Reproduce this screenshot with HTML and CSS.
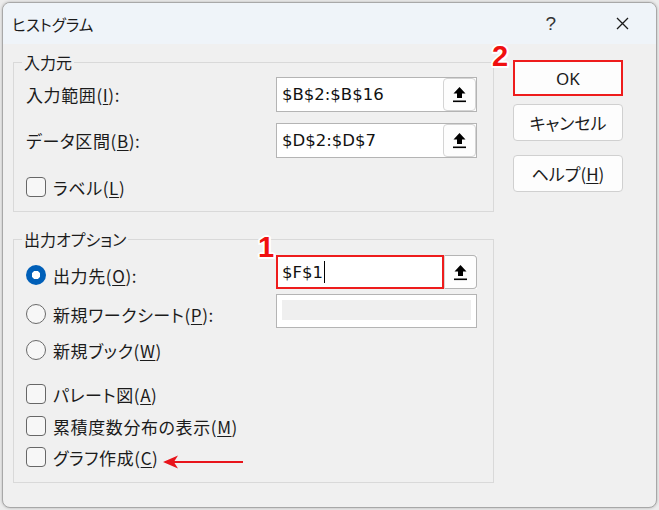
FILE: index.html
```html
<!DOCTYPE html>
<html lang="ja">
<head>
<meta charset="utf-8">
<title>ヒストグラム</title>
<link rel="stylesheet" href="styles.css">
</head>
<body>
<div class="window">
  <div class="titlebar">
    <span class="title">ヒストグラム</span>
    <span class="help">?</span>
    <svg class="close" width="13" height="13" viewBox="0 0 13 13"><path d="M1 1 L12 12 M12 1 L1 12" stroke="#1a1a1a" stroke-width="1.3" fill="none"/></svg>
  </div>
  <div class="content">
    <div class="left">
      <div class="group g1">
        <span class="legend">入力元</span>
        <div class="row">
          <span class="lbl">入力範囲(<u>I</u>):</span>
          <div class="ref">
            <span class="val">$B$2:$B$16</span>
            <span class="pick"><svg width="13" height="17" viewBox="0 0 13 17"><polygon points="6.5,1 12.5,7.5 9,7.5 9,12 4,12 4,7.5 0.5,7.5" fill="#000"/><rect x="0" y="14.5" width="13" height="1.6" fill="#000"/></svg></span>
          </div>
        </div>
        <div class="row r2">
          <span class="lbl">データ区間(<u>B</u>):</span>
          <div class="ref">
            <span class="val">$D$2:$D$7</span>
            <span class="pick"><svg width="13" height="17" viewBox="0 0 13 17"><polygon points="6.5,1 12.5,7.5 9,7.5 9,12 4,12 4,7.5 0.5,7.5" fill="#000"/><rect x="0" y="14.5" width="13" height="1.6" fill="#000"/></svg></span>
          </div>
        </div>
        <div class="check c-label"><span class="box"></span><span>ラベル(<u>L</u>)</span></div>
      </div>

      <div class="group g2">
        <span class="legend">出力オプション</span>
        <div class="row o1">
          <span class="lbl opt"><span class="radio on"></span>出力先(<u>O</u>):</span>
          <div class="ref active">
            <span class="val focus">$F$1<span class="caret"></span></span>
            <span class="pick"><svg width="13" height="17" viewBox="0 0 13 17"><polygon points="6.5,1 12.5,7.5 9,7.5 9,12 4,12 4,7.5 0.5,7.5" fill="#000"/><rect x="0" y="14.5" width="13" height="1.6" fill="#000"/></svg></span>
          </div>
        </div>
        <div class="row o2">
          <span class="lbl opt"><span class="radio"></span>新規ワークシート(<u>P</u>):</span>
          <div class="ref disabled"><span class="inner"></span></div>
        </div>
        <div class="check o3"><span class="radio"></span><span>新規ブック(<u>W</u>)</span></div>
        <div class="check k1"><span class="box"></span><span>パレート図(<u>A</u>)</span></div>
        <div class="check k2"><span class="box"></span><span>累積度数分布の表示(<u>M</u>)</span></div>
        <div class="check k3"><span class="box"></span><span>グラフ作成(<u>C</u>)</span></div>
      </div>
    </div>
    <div class="right">
      <button class="btn ok">OK</button>
      <button class="btn cancel">キャンセル</button>
      <button class="btn helpbtn">ヘルプ(<u>H</u>)</button>
    </div>
  </div>
  <span class="mark m2">2</span>
  <span class="mark m1">1</span>
  <svg class="arrow" width="82" height="14" viewBox="0 0 82 14"><polygon points="0,7 15,0.5 11.5,6 80,6 80,8 11.5,8 15,13.5" fill="#e8141b"/></svg>
</div>
</body>
</html>
```
FILE: styles.css
```css
* { box-sizing: border-box; }
html, body { margin: 0; padding: 0; }
body {
  background: #ececec;
  width: 659px;
  height: 510px;
  overflow: hidden;
  font-family: "Noto Sans CJK JP", "Noto Sans", sans-serif;
  font-feature-settings: "palt";
  color: #1b1b1b;
}
.window {
  position: relative;
  margin: 2px 0 0 2px;
  width: 655px;
  height: 506px;
  border: 1px solid #a8a8a8;
  border-radius: 8px;
  background: #f0f0f0;
  overflow: hidden;
  box-shadow: 0 0 3px rgba(0,0,0,0.25);
}
.titlebar {
  height: 41px;
  background: #eff4f9;
  display: flex;
  align-items: center;
  padding-left: 9px;
}
.title { font-size: 15.5px; flex: 1; }
.help { font-size: 19px; font-family: "Liberation Sans", sans-serif; margin-right: 60px; color: #333; }
.close { margin-right: 27px; }

.content {
  display: flex;
  padding: 16px 0 0 10px;
}
.left { width: 481px; display: flex; flex-direction: column; padding-top: 2px; }
.group {
  position: relative;
  border: 1px solid #d9d9d9;
  padding: 14px 16px 12px 12px;
}
.legend {
  position: absolute;
  top: -13px;
  left: 8px;
  padding: 0 2px;
  background: #f0f0f0;
  font-size: 16px;
  line-height: 24px;
}
.g2 { margin-top: 27px; padding-top: 15px; padding-bottom: 13px; }

.row { display: flex; align-items: center; height: 35px; }
.r2 { margin-top: 11px; }
.lbl { flex: 1; font-size: 17px; display: flex; align-items: center; letter-spacing: 0.6px; }
.opt { padding-top: 6px; }
u { text-decoration-thickness: 1px; text-underline-offset: 2px; }

.ref {
  width: 201px;
  height: 35px;
  border: 1px solid #b4b4b4;
  background: #fff;
  display: flex;
  align-items: stretch;
}
.val {
  flex: 1;
  font-family: "DejaVu Sans", sans-serif;
  font-feature-settings: normal;
  font-size: 16.5px;
  padding-left: 5px;
  display: flex;
  align-items: center;
  color: #111;
}
.pick {
  width: 33px;
  border: 1px solid #d4d4d4;
  border-radius: 4px;
  background: #fdfdfd;
  display: flex;
  align-items: center;
  justify-content: center;
}
.active { border: none; }
.active .focus {
  border: 2px solid #ee1c1c;
  padding-left: 4px;
}
.active .pick { border: 1px solid #b4b4b4; border-left-color: #d4d4d4; border-radius: 0 4px 4px 0; }
.caret {
  display: inline-block;
  width: 1px;
  height: 22px;
  background: #000;
  margin-left: 1px;
}
.o1 { height: 34px; }
.o1 .ref { height: 34px; }
.o2 { margin-top: 5px; height: 34px; }
.disabled { height: 34px; padding: 5px; }
.disabled .inner { flex: 1; background: #efefef; height: 20px; }

.check {
  display: flex;
  align-items: center;
  height: 24px;
  font-size: 17px;
  letter-spacing: 0.6px;
}
.c-label { margin-top: 17px; }
.o3 { margin-top: 10px; }
.k1 { margin-top: 20px; }
.k2 { margin-top: 8px; }
.k3 { margin-top: 7px; }

.box {
  width: 20px;
  height: 20px;
  border: 1px solid #676767;
  border-radius: 4px;
  background: #f7f7f7;
  margin-right: 7px;
  flex: none;
}
.radio {
  width: 20px;
  height: 20px;
  border: 1px solid #6a6a6a;
  border-radius: 50%;
  background: #f7f7f7;
  margin-right: 7px;
  flex: none;
  display: inline-block;
}
.radio.on {
  border: none;
  background: radial-gradient(circle, #fff 0 4px, #005fb8 4.5px);
}

.right {
  margin-left: 19px;
  display: flex;
  flex-direction: column;
}
.btn {
  width: 110px;
  height: 36px;
  border: 1px solid #d0d0d0;
  border-radius: 4px;
  background: #fdfdfd;
  font-family: "Noto Sans CJK JP", "Noto Sans", sans-serif;
  font-feature-settings: "palt";
  font-size: 17px;
  color: #1b1b1b;
  padding: 0;
}
.ok { border: 2px solid #ee1c1c; border-radius: 0; font-family: "Noto Sans", sans-serif; font-size: 17px; }
.cancel { margin-top: 8px; height: 37px; }
.helpbtn { margin-top: 14px; height: 37px; }

.mark {
  position: absolute;
  font-family: "Liberation Sans", sans-serif;
  font-weight: bold;
  font-size: 29px;
  line-height: 1;
  color: #f01010;
  text-shadow: -2px 0 #fff, 2px 0 #fff, 0 -2px #fff, 0 2px #fff, -1.5px -1.5px #fff, 1.5px 1.5px #fff, -1.5px 1.5px #fff, 1.5px -1.5px #fff;
}
.m2 { left: 489px; top: 39px; }
.m1 { left: 255px; top: 230px; }
.arrow { position: absolute; left: 160px; top: 452px; }
```
